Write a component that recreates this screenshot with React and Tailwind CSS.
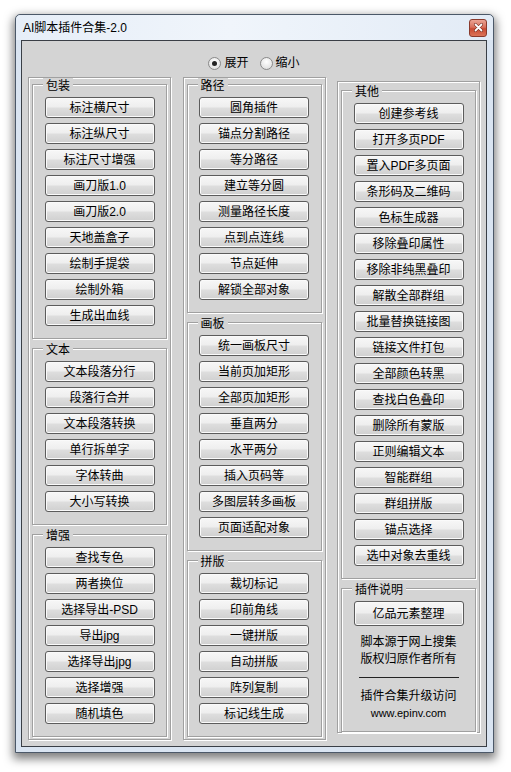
import React from 'react';

const FONT = { fontFamily: '"Liberation Sans", "Noto Sans CJK SC", sans-serif' };

const col1 = [
  { title: '包装', items: ['标注横尺寸', '标注纵尺寸', '标注尺寸增强', '画刀版1.0', '画刀版2.0', '天地盖盒子', '绘制手提袋', '绘制外箱', '生成出血线'] },
  { title: '文本', items: ['文本段落分行', '段落行合并', '文本段落转换', '单行拆单字', '字体转曲', '大小写转换'] },
  { title: '增强', items: ['查找专色', '两者换位', '选择导出-PSD', '导出jpg', '选择导出jpg', '选择增强', '随机填色'] },
];

const col2 = [
  { title: '路径', items: ['圆角插件', '锚点分割路径', '等分路径', '建立等分圆', '测量路径长度', '点到点连线', '节点延伸', '解锁全部对象'] },
  { title: '画板', items: ['统一画板尺寸', '当前页加矩形', '全部页加矩形', '垂直两分', '水平两分', '插入页码等', '多图层转多画板', '页面适配对象'] },
  { title: '拼版', items: ['裁切标记', '印前角线', '一键拼版', '自动拼版', '阵列复制', '标记线生成'] },
];

const others = [
  '创建参考线', '打开多页PDF', '置入PDF多页面', '条形码及二维码', '色标生成器', '移除叠印属性',
  '移除非纯黑叠印', '解散全部群组', '批量替换链接图', '链接文件打包', '全部颜色转黑', '查找白色叠印',
  '删除所有蒙版', '正则编辑文本', '智能群组', '群组拼版', '锚点选择', '选中对象去重线',
];

function Btn({ children, tall }) {
  return (
    <button
      className={`flex w-[110px] shrink-0 items-center justify-center rounded-[3px] border border-[#5c5c5c] bg-[linear-gradient(#f7f7f7_0%,#eeeeee_48%,#dedede_52%,#d0d0d0_100%)] text-[12px] leading-none text-black shadow-[inset_0_0_0_1px_#fafafa] ${tall ? 'h-[25px]' : 'h-[21px]'}`}
    >
      {children}
    </button>
  );
}

function Legend({ children }) {
  return (
    <legend className="ml-[10px] h-[13px] bg-[#d4d4d4] px-[3px] pt-[3px] text-[12px] leading-[10px] text-black">
      {children}
    </legend>
  );
}

function Group({ title, children }) {
  return (
    <fieldset className="min-w-0 border border-[#a0a0a0] px-0 pt-[6px] pb-[12px] shadow-[1px_1px_0_#ffffff,inset_1px_1px_0_#ffffff]">
      <Legend>{title}</Legend>
      <div className="flex flex-col items-center gap-[5px]">{children}</div>
    </fieldset>
  );
}

function Column({ groups }) {
  return (
    <div className="flex w-[143px] flex-col gap-[3px] border border-[#a0a0a0] px-[3px] pb-[2px] shadow-[1px_1px_0_#ffffff,inset_1px_1px_0_#ffffff]">
      {groups.map((g) => (
        <Group key={g.title} title={g.title}>
          {g.items.map((it) => (
            <Btn key={it}>{it}</Btn>
          ))}
        </Group>
      ))}
    </div>
  );
}

function Radio({ checked, label }) {
  return (
    <div className="flex items-center gap-[3px]">
      <span className="flex h-[13px] w-[13px] items-center justify-center rounded-full border border-[#8a8a8a] bg-[radial-gradient(circle_at_50%_35%,#ffffff,#d8d8d8)]">
        {checked && <span className="h-[5px] w-[5px] rounded-full bg-[#222]" />}
      </span>
      <span className="text-[12px] leading-[16px]">{label}</span>
    </div>
  );
}

function CloseButton() {
  return (
    <div className="flex h-[18px] w-[18px] items-center justify-center rounded-[3px] border border-[#8a3a2c] bg-[linear-gradient(#eba494_0%,#d8705c_45%,#c84a32_55%,#dc7458_100%)]">
      <svg width="9" height="9" viewBox="0 0 9 9">
        <path d="M1.5 1.5L7.5 7.5M7.5 1.5L1.5 7.5" stroke="#6a2418" strokeWidth="3" strokeLinecap="round" />
        <path d="M1.5 1.5L7.5 7.5M7.5 1.5L1.5 7.5" stroke="#ffffff" strokeWidth="1.8" strokeLinecap="round" />
      </svg>
    </div>
  );
}

export default function App() {
  return (
    <div className="min-h-screen bg-white pt-[14px] pl-[15px] text-black" style={FONT}>
      <div className="w-[479px] rounded-t-[5px] border border-[#4b5868] bg-[#d9e4f1] shadow-[0_4px_10px_2px_rgba(0,0,0,0.5)]">
        <div className="flex h-[25px] items-center justify-between rounded-t-[5px] bg-[linear-gradient(90deg,#e6eef8_0%,#f0f5fb_45%,#e2ebf6_100%)] pr-[6px] pl-[7px]">
          <span className="text-[12px] leading-none">AI脚本插件合集-2.0</span>
          <CloseButton />
        </div>
        <div className="pr-[6px] pb-[5px] pl-[5px]">
          <div className="border border-[#3a3f46] bg-[#d4d4d4] px-[6px] pt-[14px] pb-[6px]">
            <div className="flex justify-center gap-[11px]">
              <Radio checked label="展开" />
              <Radio label="缩小" />
            </div>
            <div className="mt-[6px] flex items-start justify-between">
              <Column groups={col1} />
              <Column groups={col2} />
              <div className="mt-[4px] flex w-[143px] flex-col gap-[3px] border border-[#a0a0a0] px-[3px] pt-[2px] shadow-[1px_1px_0_#ffffff,inset_1px_1px_0_#ffffff]">
                <Group title="其他">
                  {others.map((it) => (
                    <Btn key={it}>{it}</Btn>
                  ))}
                </Group>
                <fieldset className="min-w-0 border border-[#a0a0a0] px-0 pt-[6px] pb-[9px] shadow-[1px_1px_0_#ffffff,inset_1px_1px_0_#ffffff]">
                  <Legend>插件说明</Legend>
                  <div className="flex flex-col items-center">
                    <Btn tall>亿品元素整理</Btn>
                    <p className="mt-[8px] text-center text-[12px] leading-[17px]">
                      脚本源于网上搜集
                      <br />
                      版权归原作者所有
                    </p>
                    <div className="mt-[9px] h-px w-[100px] bg-[#222]" />
                    <p className="mt-[10px] text-[12px] leading-[17px]">插件合集升级访问</p>
                    <p className="text-[11px] leading-[17px]">www.epinv.com</p>
                  </div>
                </fieldset>
              </div>
            </div>
          </div>
        </div>
      </div>
    </div>
  );
}
